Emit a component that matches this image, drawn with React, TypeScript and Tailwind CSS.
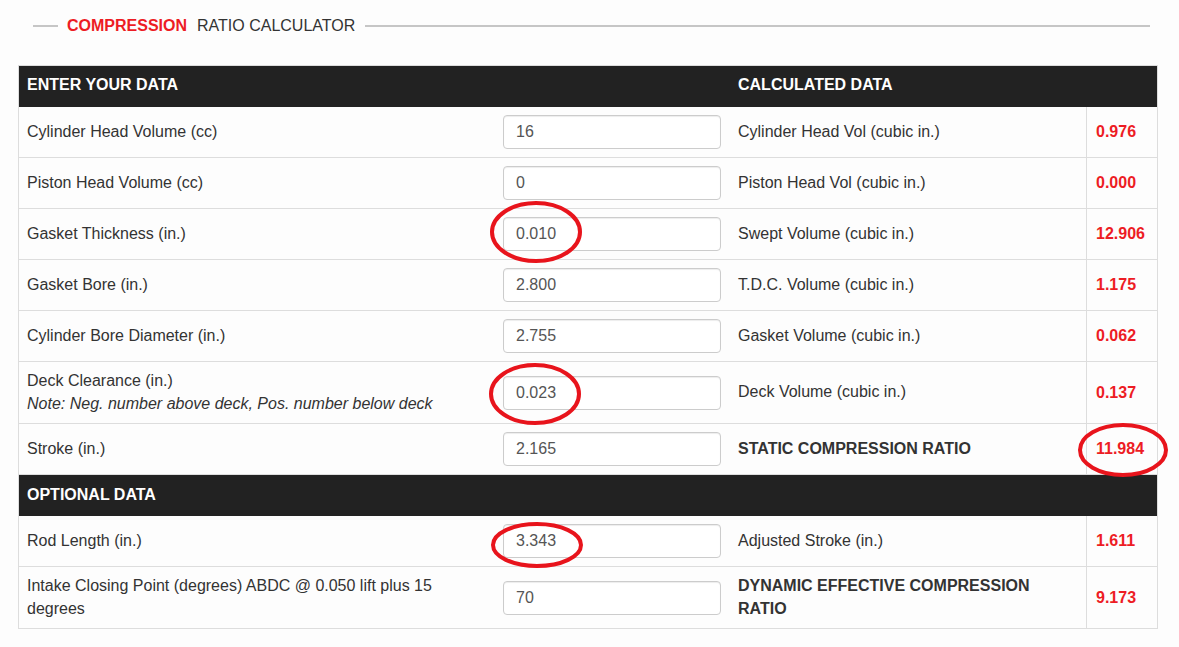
import React from "react";

const font = { fontFamily: '"Liberation Sans", Arial, sans-serif' };

type Row = {
  label: React.ReactNode;
  value: string;
  calc: React.ReactNode;
  result: string;
  tall?: boolean;
  boldCalc?: boolean;
};

const mainRows: Row[] = [
  { label: "Cylinder Head Volume (cc)", value: "16", calc: "Cylinder Head Vol (cubic in.)", result: "0.976" },
  { label: "Piston Head Volume (cc)", value: "0", calc: "Piston Head Vol (cubic in.)", result: "0.000" },
  { label: "Gasket Thickness (in.)", value: "0.010", calc: "Swept Volume (cubic in.)", result: "12.906" },
  { label: "Gasket Bore (in.)", value: "2.800", calc: "T.D.C. Volume (cubic in.)", result: "1.175" },
  { label: "Cylinder Bore Diameter (in.)", value: "2.755", calc: "Gasket Volume (cubic in.)", result: "0.062" },
  {
    label: (
      <>
        Deck Clearance (in.)
        <br />
        <em>Note: Neg. number above deck, Pos. number below deck</em>
      </>
    ),
    value: "0.023",
    calc: "Deck Volume (cubic in.)",
    result: "0.137",
    tall: true,
  },
  { label: "Stroke (in.)", value: "2.165", calc: "STATIC COMPRESSION RATIO", result: "11.984", boldCalc: true },
];

const optRows: Row[] = [
  { label: "Rod Length (in.)", value: "3.343", calc: "Adjusted Stroke (in.)", result: "1.611" },
  {
    label: "Intake Closing Point (degrees) ABDC @ 0.050 lift plus 15 degrees",
    value: "70",
    calc: "DYNAMIC EFFECTIVE COMPRESSION RATIO",
    result: "9.173",
    tall: true,
    boldCalc: true,
  },
];

function DataRow({ r }: { r: Row }) {
  return (
    <div
      className={`grid grid-cols-[476px_233px_358px_1px_70px] border-b border-[#dddddd] ${
        r.tall ? "h-[62px]" : "h-[51px]"
      }`}
    >
      <div className="flex items-center pl-2 pr-2 text-[16px] leading-[22.86px] text-[#333333]">
        <div>{r.label}</div>
      </div>
      <div className="flex items-center pl-2 pr-[7px]">
        <input
          readOnly
          value={r.value}
          className="h-[34px] w-[218px] rounded-[4px] border border-[#cccccc] bg-white px-3 text-[16px] text-[#555555] shadow-[inset_0_1px_1px_rgba(0,0,0,0.075)] outline-none"
          style={font}
        />
      </div>
      <div
        className={`flex items-center pl-[10px] pr-[16px] text-[16px] leading-[22.86px] text-[#333333] ${
          r.boldCalc ? "font-bold" : ""
        }`}
      >
        <div>{r.calc}</div>
      </div>
      <div className="bg-[#dddddd]" />
      <div className="flex items-center pl-[9px] text-[16px] font-bold text-[#ed1c24]">{r.result}</div>
    </div>
  );
}

export default function App() {
  return (
    <div className="relative min-h-[647px] w-[1179px] bg-[#fdfdfd]" style={font}>
      <div className="flex h-[52px] items-center pl-[33px] pr-[29px]">
        <div className="h-[2px] w-[25px] bg-[#c6c6c6]" />
        <div className="ml-[9px] text-[16px] font-bold text-[#ed1c24]">COMPRESSION</div>
        <div className="ml-[10px] text-[16px] text-[#333333]">RATIO CALCULATOR</div>
        <div className="ml-[10px] h-[2px] flex-1 bg-[#c6c6c6]" />
      </div>
      <div className="ml-[18px] mt-[13px] w-[1140px] border-l border-r border-t border-[#dddddd]">
        <div className="grid h-[41px] grid-cols-[709px_429px] items-center bg-[#222222] pb-[4px] text-[16px] font-bold text-white">
          <div className="pl-2">ENTER YOUR DATA</div>
          <div className="pl-[10px]">CALCULATED DATA</div>
        </div>
        {mainRows.map((r, i) => (
          <DataRow key={i} r={r} />
        ))}
        <div className="flex h-[41px] items-center bg-[#222222] pb-[2px] pl-2 text-[16px] font-bold text-white">
          OPTIONAL DATA
        </div>
        {optRows.map((r, i) => (
          <DataRow key={i} r={r} />
        ))}
      </div>
      <svg className="pointer-events-none absolute left-0 top-0" width="1179" height="647">
        <g fill="none" stroke="#e8141c" strokeWidth="4">
          <ellipse cx="536" cy="232" rx="44" ry="29" />
          <ellipse cx="535" cy="394" rx="44" ry="29" />
          <ellipse cx="1123" cy="450" rx="43" ry="25" />
          <ellipse cx="537" cy="545" rx="44" ry="21" />
        </g>
      </svg>
    </div>
  );
}
